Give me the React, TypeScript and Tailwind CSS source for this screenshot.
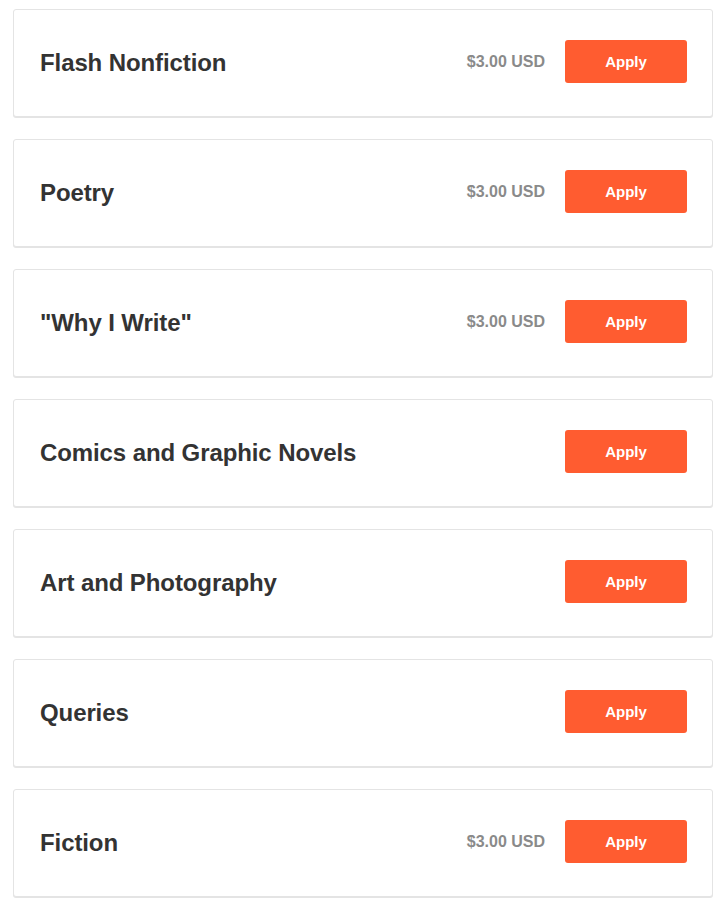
const CATEGORIES = [
  { id: 1, title: "Flash Nonfiction", price: "$3.00 USD" },
  { id: 2, title: "Poetry", price: "$3.00 USD" },
  { id: 3, title: "\"Why I Write\"", price: "$3.00 USD" },
  { id: 4, title: "Comics and Graphic Novels", price: null },
  { id: 5, title: "Art and Photography", price: null },
  { id: 6, title: "Queries", price: null },
  { id: 7, title: "Fiction", price: "$3.00 USD" },
];

export default function App() {
  return (
    <div
      className="min-h-screen bg-white pt-[9px] pl-[13px] pr-[15px]"
      style={{ fontFamily: '"Liberation Sans", Arial, sans-serif' }}
    >
      <div className="flex flex-col gap-[22px]">
        {CATEGORIES.map((cat) => (
          <div
            key={cat.id}
            className="flex items-center rounded-[3px] border border-[#e4e4e4] bg-white pl-[26px] pr-[25px] pt-[30px] pb-[33px] shadow-[0_1px_0_#e4e4e4]"
          >
            <h3 className="flex-1 pt-[2px] text-[24px] font-bold leading-none tracking-[-0.1px] text-[#333333]">
              {cat.title}
            </h3>
            {cat.price && (
              <span className="mr-[20px] pt-[1px] text-[16px] font-bold leading-none text-[#8a8a8a]">
                {cat.price}
              </span>
            )}
            <button className="h-[43px] w-[122px] rounded-[3px] bg-[#ff5c30] pt-[1px] text-[15px] font-bold text-white">
              Apply
            </button>
          </div>
        ))}
      </div>
    </div>
  );
}
